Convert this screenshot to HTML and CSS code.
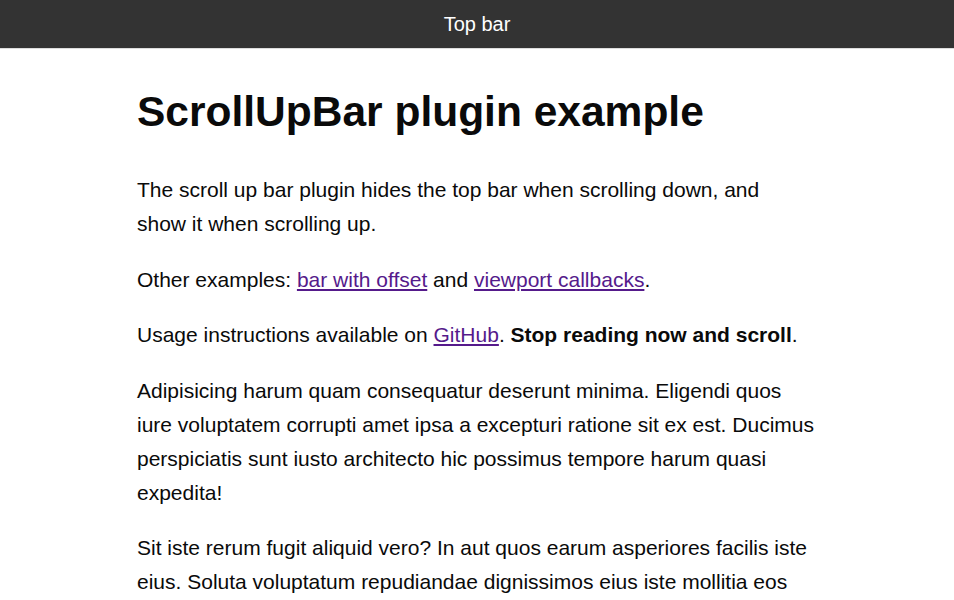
FILE: index.html
```html
<!DOCTYPE html>
<html lang="en">
<head>
    <meta charset="UTF-8">
    <meta name="viewport" content="width=device-width, initial-scale=1.0">
    <title>ScrollUpBar plugin example</title>
    <link rel="stylesheet" href="styles.css">
</head>
<body>

<div class="top-bar">Top bar</div>

<div class="container">

    <h1>ScrollUpBar plugin example</h1>

    <p>The scroll up bar plugin hides the top bar when scrolling down, and<br>
    show it when scrolling up.</p>

    <p>Other examples: <a href="#">bar with offset</a> and <a href="#">viewport callbacks</a>.</p>

    <p>Usage instructions available on <a href="#">GitHub</a>. <strong>Stop reading now and scroll</strong>.</p>

    <p>Adipisicing harum quam consequatur deserunt minima. Eligendi quos iure voluptatem corrupti amet ipsa a excepturi ratione sit ex est. Ducimus perspiciatis sunt iusto architecto hic possimus tempore harum quasi expedita!</p>

    <p>Sit iste rerum fugit aliquid vero? In aut quos earum asperiores facilis iste eius. Soluta voluptatum repudiandae dignissimos eius iste mollitia eos quidem dolorum. Et officia libero illo vero est, nostrum eaque.</p>

</div>

</body>
</html>
```

FILE: styles.css
```css
body {
    font-family: 'Liberation Sans', Arial, sans-serif;
    font-size: 21px;
    line-height: 34px;
    color: #0a0a0a;
    background-color: #fff;
    margin: 0;
}

.top-bar {
    position: fixed;
    top: 0;
    left: 0;
    right: 0;
    height: 48px;
    line-height: 48px;
    font-size: 20px;
    text-align: center;
    background-color: #333;
    color: #fff;
    border-bottom: 1px solid #ddd;
}

.container {
    max-width: 680px;
    margin: 0 auto;
    padding-top: 87px;
}

h1 {
    font-size: 42.5px;
    line-height: 50px;
    margin: 0 0 36px;
}

p {
    margin: 0 0 21.5px;
}

a {
    color: #551a8b;
}
```
